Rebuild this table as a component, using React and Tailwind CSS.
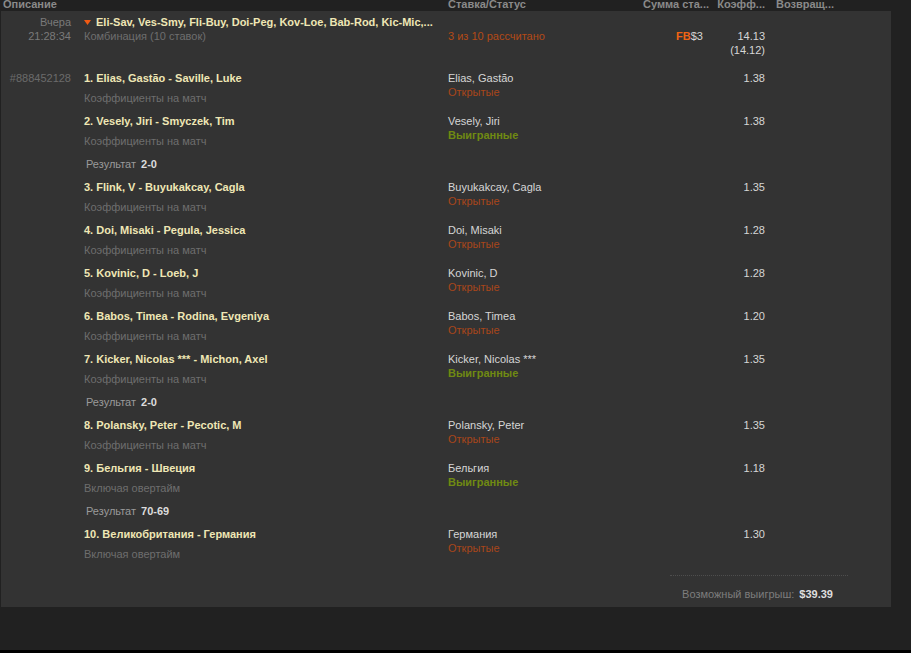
const legs = [
  { title: "1. Elias, Gastão - Saville, Luke", sub: "Коэффициенты на матч", pick: "Elias, Gastão", status: "open", odds: "1.38", id: "#888452128" },
  { title: "2. Vesely, Jiri - Smyczek, Tim", sub: "Коэффициенты на матч", pick: "Vesely, Jiri", status: "won", odds: "1.38", result: "2-0" },
  { title: "3. Flink, V - Buyukakcay, Cagla", sub: "Коэффициенты на матч", pick: "Buyukakcay, Cagla", status: "open", odds: "1.35" },
  { title: "4. Doi, Misaki - Pegula, Jessica", sub: "Коэффициенты на матч", pick: "Doi, Misaki", status: "open", odds: "1.28" },
  { title: "5. Kovinic, D - Loeb, J", sub: "Коэффициенты на матч", pick: "Kovinic, D", status: "open", odds: "1.28" },
  { title: "6. Babos, Timea - Rodina, Evgeniya", sub: "Коэффициенты на матч", pick: "Babos, Timea", status: "open", odds: "1.20" },
  { title: "7. Kicker, Nicolas *** - Michon, Axel", sub: "Коэффициенты на матч", pick: "Kicker, Nicolas ***", status: "won", odds: "1.35", result: "2-0" },
  { title: "8. Polansky, Peter - Pecotic, M", sub: "Коэффициенты на матч", pick: "Polansky, Peter", status: "open", odds: "1.35" },
  { title: "9. Бельгия - Швеция", sub: "Включая овертайм", pick: "Бельгия", status: "won", odds: "1.18", result: "70-69" },
  { title: "10. Великобритания - Германия", sub: "Включая овертайм", pick: "Германия", status: "open", odds: "1.30" },
];

const cols = "grid grid-cols-[83px_364px_195px_67px_62px_1fr]";

const Leg = ({ leg }) => (
  <>
    <div className={`${cols} pb-[9px]`}>
      <div className="pr-[13px] text-right text-[#6b6b6b]">{leg.id}</div>
      <div>
        <div className="font-bold text-[#efe7b5]">{leg.title}</div>
        <div className="mt-[6px] text-[#6e6e6e]">{leg.sub}</div>
      </div>
      <div>
        <div className="text-[#d6d6d6]">{leg.pick}</div>
        {leg.status === "won" ? (
          <div className="font-bold text-[#6f8a12]">Выигранные</div>
        ) : (
          <div className="text-[#a9461a]">Открытые</div>
        )}
      </div>
      <div></div>
      <div className="pr-[7px] text-right text-[#d6d6d6]">{leg.odds}</div>
      <div></div>
    </div>
    {leg.result && (
      <div className={`${cols} pb-[9px]`}>
        <div></div>
        <div className="pl-[2px] text-[#9a9a9a]">
          Результат <span className="ml-[2px] font-bold text-[#dcdcdc]">{leg.result}</span>
        </div>
      </div>
    )}
  </>
);

export default function App() {
  return (
    <div
      className="flex h-[653px] w-[911px] flex-col overflow-hidden bg-[#212121] text-[11px] leading-[14px]"
      style={{ fontFamily: '"Liberation Sans", Arial, sans-serif' }}
    >
      <div className="h-[11px] shrink-0 overflow-hidden">
        <div className="-mt-[3px] grid grid-cols-[84px_364px_195px_67px_62px_1fr] font-bold text-[#8a8a8a]">
          <div className="pl-[3px] col-span-2">Описание</div>
          <div>Ставка/Статус</div>
          <div className="pr-[7px] text-right whitespace-nowrap">Сумма ста...</div>
          <div className="pr-[7px] text-right whitespace-nowrap">Коэфф...</div>
          <div className="pl-[4px] whitespace-nowrap">Возвращ...</div>
        </div>
      </div>

      <div className="ml-[1px] w-[890px] bg-[#333333] pt-[4px]">
        <div className={`${cols} pb-[14px]`}>
          <div className="pr-[13px] text-right text-[#7a7a7a]">
            <div>Вчера</div>
            <div>21:28:34</div>
          </div>
          <div>
            <div className="flex items-center font-bold text-[#efe7b5]">
              <svg width="7" height="5" viewBox="0 0 7 5" className="mr-[5px]">
                <polygon points="0,0 7,0 3.5,5" fill="#f05a14" />
              </svg>
              Eli-Sav, Ves-Smy, Fli-Buy, Doi-Peg, Kov-Loe, Bab-Rod, Kic-Mic,...
            </div>
            <div className="text-[#6e6e6e]">Комбинация (10 ставок)</div>
          </div>
          <div className="pt-[14px] text-[#b34a16]">3 из 10 рассчитано</div>
          <div className="pt-[14px] pr-[7px] text-right">
            <span className="font-bold text-[#f06414]">FB</span>
            <span className="text-[#d6d6d6]">$3</span>
          </div>
          <div className="pt-[14px] pr-[7px] text-right text-[#d6d6d6]">
            <div>14.13</div>
            <div>(14.12)</div>
          </div>
          <div></div>
        </div>

        {legs.map((leg, i) => (
          <Leg key={i} leg={leg} />
        ))}

        <div className="ml-auto mr-[43px] mt-[5px] w-[178px] border-t border-dotted border-[#4e4e4e] pt-[11px] pb-[6px] pr-[15px] text-right">
          <span className="text-[#7d7d7d]">Возможный выигрыш:</span>
          <span className="ml-[5px] font-bold text-[#dedede]">$39.39</span>
        </div>
      </div>

      <div className="flex-1"></div>
      <div className="h-[3px] shrink-0 bg-black"></div>
    </div>
  );
}
